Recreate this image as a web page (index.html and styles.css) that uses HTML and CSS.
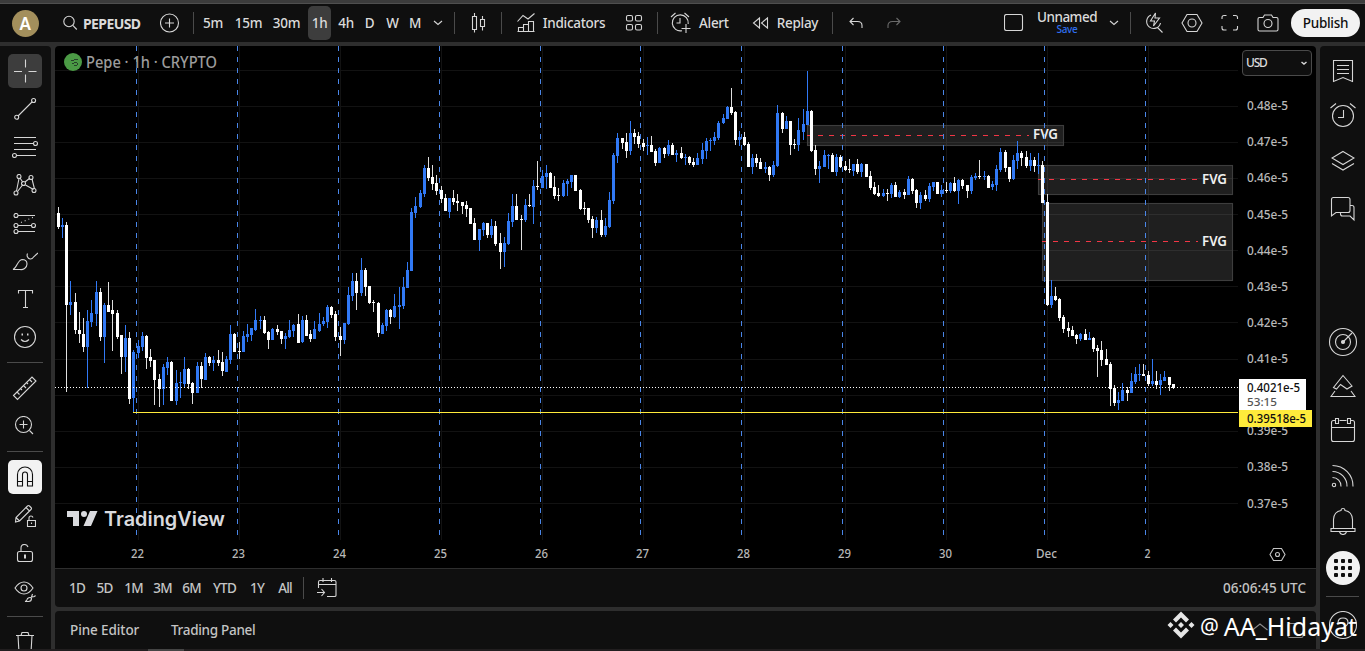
FILE: index.html
```html
<!DOCTYPE html>
<html lang="en">
<head>
    <meta charset="UTF-8">
    <meta name="viewport" content="width=device-width, initial-scale=1.0">
    <title>PEPEUSD</title>
    <link rel="stylesheet" href="styles.css">
</head>
<body>

<header class="topbar">
    <div class="avatar">A</div>
    <div class="symbol">
        <svg width="16" height="16" viewBox="0 0 16 16"><circle cx="7" cy="6.5" r="5.2"/><path d="M10.8 10.3l4 4.2"/></svg>
        <b>PEPEUSD</b>
    </div>
    <svg width="20" height="20" viewBox="0 0 20 20"><circle cx="9.500" cy="10" r="9"/><path d="M5 10h9M9.500 5.500v9"/></svg>
    <i class="sep"></i>
    <span>5m</span>
    <span>15m</span>
    <span>30m</span>
    <span class="active">1h</span>
    <span>4h</span>
    <span>D</span>
    <span>W</span>
    <span>M</span>
    <svg width="10" height="6" viewBox="0 0 10 6"><path d="M1 1l4 3.5L9 1"/></svg>
    <i class="sep"></i>
    <svg width="16" height="20" viewBox="0 0 16 20"><path d="M1.5 3.5h4v13h-4zM3.5 0v3.5M3.5 16.500v3M9.500 6.500h4v7h-4zM11.500 3v3.500M11.500 13.500v4"/></svg>
    <i class="sep"></i>
    <div class="tool">
        <svg width="18" height="20" viewBox="0 0 18 20"><path d="M.5 8.500l5.500-6 5 3.500 6.500-5.500M1.500 18.500v-4h5v4M6.500 18.500v-7h5v7M11.500 18.500v-10h5v10M.5 18.500h17"/></svg>
        <span>Indicators</span>
    </div>
    <svg width="18" height="18" viewBox="0 0 18 18"><rect x="1.500" y="1.500" width="6" height="5.500" rx="1.500"/><rect x="10.500" y="1.500" width="6" height="5.500" rx="1.500"/><rect x="1.500" y="10.500" width="6" height="5.500" rx="1.500"/><rect x="10.500" y="10.500" width="6" height="5.500" rx="1.500"/></svg>
    <i class="sep"></i>
    <div class="tool alert">
        <svg width="21" height="22" viewBox="0 0 21 22"><path d="M12 18.700A8 8 0 1 1 18.200 12M1 5l4.500-4M14.500 1l4.500 4M10 6v5H6.500M11.500 16.500h9M16 12v9"/></svg>
        <span>Alert</span>
    </div>
    <div class="tool">
        <svg width="17" height="14" viewBox="0 0 17 14"><path d="M7.500 2v10L1.500 7zM15.500 2v10l-6-5z"/></svg>
        <span>Replay</span>
    </div>
    <i class="sep"></i>
    <svg width="14" height="12" viewBox="0 0 14 12"><path d="M4.500 1L1 4.500 4.500 8M1 4.500h7.500c3 0 4.500 1.500 4.500 4V11"/></svg>
    <svg class="dim" width="14" height="12" viewBox="0 0 14 12"><path d="M9.500 1L13 4.500 9.500 8M13 4.500H5.500C2.500 4.500 1 6 1 8.500V11"/></svg>
    <i></i>
    <svg width="20" height="18" viewBox="0 0 20 18"><rect x=".5" y=".5" width="18" height="16" rx="2"/></svg>
    <div class="layout">
        <span>Unnamed</span>
        <small>Save</small>
    </div>
    <svg width="10" height="6" viewBox="0 0 10 6"><path d="M1 1l4 3.500L9 1"/></svg>
    <i class="sep"></i>
    <svg width="20" height="22" viewBox="0 0 20 22"><path d="M7 3a7 7 0 1 0 9.500 8M13.500 15.500l5 5M11.500 1L6.500 9h4l-1 5 6-8h-4.500z"/></svg>
    <svg width="22" height="20" viewBox="0 0 22 20"><path d="M6 1.500h10l5 8.500-5 8.500H6L1 10z"/><circle cx="11" cy="10" r="4"/></svg>
    <svg width="18" height="18" viewBox="0 0 18 18"><path d="M1 5V3.500Q1 1.500 3 1.500H5.500M12 1.500h2.500q2 0 2 2V5M16.500 12v2q0 2-2 2H12M5.500 16H3q-2 0-2-2v-2"/></svg>
    <svg width="22" height="20" viewBox="0 0 22 20"><path d="M2.500 4.500H6L7.500 2h7L16 4.500h3.500q1.500 0 1.500 1.500v10.500q0 1.500-1.500 1.500h-17Q1 18 1 16.500V6q0-1.500 1.500-1.500z"/><circle cx="11" cy="10.500" r="4"/></svg>
    <div class="publish">Publish</div>
</header>

<div class="main">
    <nav class="drawbar">
        <div class="btn on"><svg width="26" height="26" viewBox="0 0 26 26"><path d="M13.500 1.500v8M13.500 16.500v8M2 13.500h8M16.500 13.500h8"/></svg></div>
        <svg width="24" height="24" viewBox="0 0 24 24"><path d="M5 19L19 5"/><circle cx="3.700" cy="20.300" r="2"/><circle cx="20.600" cy="3.500" r="2"/></svg>
        <svg width="26" height="22" viewBox="0 0 26 22"><path d="M2 1.500h22M2 7.500h19.500M2 13.500h22M5 19.500h19"/><circle cx="23.500" cy="7.500" r="2"/><circle cx="2.500" cy="19.500" r="2"/></svg>
        <svg width="24" height="22" viewBox="0 0 24 22"><path d="M3.500 17L6 4.500M4.500 17.500l5.500-7M7 4l3 4.500M12 8l5-4M12.500 11l8 4.500M19 5l2.500 10"/><circle cx="3" cy="19" r="2"/><circle cx="6" cy="2.500" r="2"/><circle cx="10.500" cy="9.500" r="2"/><circle cx="18" cy="3.500" r="2"/><circle cx="21" cy="16.500" r="2"/></svg>
        <svg class="down" width="24" height="22" viewBox="0 0 24 22"><path d="M5 2.500h17M5 12.500h13M5 18.500h17"/><path d="M8 9.500l14-6" stroke-dasharray="1 3"/><circle cx="3" cy="2.500" r="2"/><circle cx="3" cy="12.500" r="2"/><circle cx="20.500" cy="12.500" r="2"/><circle cx="3" cy="18.500" r="2"/></svg>
        <svg class="down" width="26" height="20" viewBox="0 0 26 20"><path d="M1 17.500C5 16 5.500 8 10 7.500q5 0 5 4.500c0 4-4 6-7 5.500zM15.500 1.500c-1 2 0 5 2.500 5.500 2 .5 3-1 4-2.500l4-3.500"/></svg>
        <svg width="18" height="20" viewBox="0 0 18 20"><path d="M2.500 4.500V1.500h14v3M9.500 1.500v17M7 18.500h5"/></svg>
        <svg width="24" height="24" viewBox="0 0 24 24"><circle cx="12" cy="12" r="10.500"/><path d="M8 14.500q4 4 8 0"/><path d="M8.500 9.500h1.500M14 9.500h1.500" stroke-width="2"/></svg>
        <i class="line"></i>
        <svg width="26" height="26" viewBox="0 0 26 26"><path d="M1.500 20.500L20 2l4 4L5.500 24.500zM5 17l2.500 2.500M8.500 13.500l1.500 1.500M11.500 10.500l2.500 2.500M14.500 7.500l1.500 1.500M17.500 4.500L20 7"/></svg>
        <svg width="22" height="20" viewBox="0 0 22 20"><circle cx="9.500" cy="8.500" r="8"/><path d="M15.500 14.500l3.500 3.500M5.500 8.500h8M9.500 4.500v8"/></svg>
        <i class="line"></i>
        <div class="btn magnet"><svg width="18" height="22" viewBox="0 0 18 22"><path d="M1.500 20V8.500a7.500 7.500 0 0 1 15 0V20h-5V8.500a2.500 2.500 0 0 0-5 0V20zM1.500 15.500h5M11.500 15.500h5"/></svg></div>
        <svg width="22" height="24" viewBox="0 0 22 24"><path d="M1.500 18l.5-4.500L13.500 2q1-1 2 0l1.500 1.500q1 1 0 2L5.500 17zM2 13.500L5.500 17M12 3.500L15.500 7M13.500 16.500h8v6h-8zM15 16v-2q0-2 2-2 1.500 0 2 1.500M17.500 18.500v1.500"/></svg>
        <svg width="18" height="20" viewBox="0 0 18 20"><rect x="1.500" y="7.500" width="15" height="10" rx="2"/><path d="M5 7V4q0-3.500 3.500-3.500Q11 .5 12 3"/><path d="M9 10.500v4" stroke-width="2"/></svg>
        <svg width="22" height="24" viewBox="0 0 22 24"><path d="M1 8q4-6 9-6t9 6q-4 6-9 6T1 8zM11 21.500q2-.5 2.500-3 3-2 4 0 0 3-3 3zM18.500 14l-1 3 3-.500 1-1"/><circle cx="10" cy="8" r="3"/></svg>
        <i class="line"></i>
        <svg width="20" height="22" viewBox="0 0 20 22"><path d="M1 4.500h18M6 4.500L7 1.500h6l1 3M3 4.500l1 17h12l1-17"/></svg>
    </nav>

    <div class="center">
        <div class="chart">
            <svg id="chart" class="plot" width="1261" height="522" viewBox="55 46 1261 522"></svg>
            <div class="currency">USD <svg width="8" height="6" viewBox="0 0 8 6"><path d="M1.500 2l2.500 2 2.500-2" stroke-width="1.500"/></svg></div>
        </div>
        <div class="ranges">
            <span>1D</span>
            <span>5D</span>
            <span>1M</span>
            <span>3M</span>
            <span>6M</span>
            <span>YTD</span>
            <span>1Y</span>
            <span>All</span>
            <i class="sep"></i>
            <svg width="20" height="20" viewBox="0 0 20 20"><path d="M1.500 10V4q0-1.500 1.500-1.500h14.500q1.500 0 1.500 1.500v13.500q0 1-1.500 1H10M1.500 6.500H19M6 0v4M14.500 0v4M0 14.500h7M4.500 11l3 3.500-3 3.500"/></svg>
            <i></i>
            <span class="clock">06:06:45 UTC</span>
        </div>
        <div class="panels">
            <span class="pine">Pine Editor</span>
            <span class="trading">Trading Panel</span>
            <svg class="panel-icons" width="54" height="18" viewBox="0 0 54 18"><path d="M1.500 9L9 3l7.500 6M38.500 2.500h12q1.500 0 1.500 1.500v11q0 1.500-1.500 1.500h-12Q37 16.500 37 15V4q0-1.500 1.500-1.500z"/></svg>
        </div>
    </div>

    <nav class="sidebar">
        <svg width="22" height="24" viewBox="0 0 22 24"><path d="M1.500 1.500h19v21L11 18.500l-9.500 4zM5 6.500h12M5 10.500h12M5 14.500h12"/></svg>
        <svg width="26" height="26" viewBox="0 0 26 26"><circle cx="13" cy="14" r="10.500"/><path d="M13.500 8v7.500H8M.5 6L6 1.500M20 1.500L25.500 6"/></svg>
        <svg width="24" height="22" viewBox="0 0 24 22"><path d="M12 1.500L23 8l-11 6.500L1 8zM1 13.500l11 6.500 11-6.500"/></svg>
        <svg width="26" height="26" viewBox="0 0 26 26"><path d="M1.500 20V3.500Q1.500 1.500 3.500 1.500h14.500q2 0 2 2v11q0 2-2 2H6zM20.500 9.500H22q2 0 2 2V24l-4-4h-7.500q-2 0-2-2v-1"/></svg>
        <i></i>
        <svg width="30" height="30" viewBox="0 0 30 30"><circle cx="15" cy="15" r="13.500"/><circle cx="15" cy="15" r="7.500"/><path d="M15 15l9-9"/><circle cx="15" cy="15" r="1.500" class="solid"/></svg>
        <svg width="26" height="24" viewBox="0 0 26 24"><path d="M13 1.500l-9.500 12 3 1.500 4-4.500 6.500 4.500 5-3zM5 17l-4 5.500h24L21 17"/></svg>
        <svg width="26" height="26" viewBox="0 0 26 26"><path d="M5 3.500H3.500q-2 0-2 2v17q0 2 2 2h19q2 0 2-2v-17q0-2-2-2H21M9.500 3.500h7M1.500 10.500h23M5.500 1.500h3v5h-3zM17.500 1.500h3v5h-3z"/></svg>
        <svg width="24" height="24" viewBox="0 0 24 24"><circle cx="3" cy="21" r="1.700"/><path d="M1.500 13.500a8.500 8.500 0 0 1 8.500 9M1.500 7.500a14.500 14.500 0 0 1 14.500 15M1.500 1.500a20.500 20.500 0 0 1 20.500 21"/></svg>
        <svg width="26" height="28" viewBox="0 0 26 28"><path d="M3.500 21.500v-9Q4 4.500 11 3.500q0-2 2-2t2 2q7 1 7.500 9v9M1 21.500h24v3H1zM9.500 25q1 2.500 3.500 2.500t3.500-2.500"/></svg>
        <div class="apps"><b></b><b></b><b></b><b></b><b></b><b></b><b></b><b></b><b></b></div>
        <i class="line"></i>
        <svg width="30" height="30" viewBox="0 0 30 30"><circle cx="15" cy="14" r="13.500"/><path d="M10 12q0-5 5-5t5 4.500q0 3-5 5v2M15 21v1.500"/></svg>
    </nav>
</div>

<footer class="bottom"><i></i></footer>

<div class="handle">
    <svg width="28" height="28" viewBox="0 0 28 28"><path d="M14 .5l8 8-3 3-5-5-5 5-3-3zM3.500 11l3 3-3 3-3-3zM24.500 11l3 3-3 3-3-3zM14 11l3 3-3 3-3-3zM9 16.500l5 5 5-5 3 3-8 8-8-8z"/></svg>
    <span class="at">@</span>
    <span class="name">AA_Hidayat</span>
</div>

<script src="chart.js"></script>
</body>
</html>
```
FILE: styles.css
```css
* {
    box-sizing: border-box;
}

body {
    margin: 0;
    width: 1365px;
    height: 651px;
    overflow: hidden;
    background: #2e2e2e;
    color: #dbdbdb;
    font-family: "Noto Sans", sans-serif;
    font-size: 13.5px;
    font-weight: 500;
    letter-spacing: -0.3px;
    position: relative;
}

svg {
    display: block;
    fill: none;
    stroke: #d6d6d6;
    stroke-width: 1.1;
}

.topbar {
    height: 42px;
    border-top: 3px solid #3c3c3c;
    box-shadow: inset 0 1px #4f4f4f;
    background: #0f0f0f;
    padding-top: 1px;
    display: grid;
    grid-template-columns: 50px 97px 45px 3px 36px 35px 41px 25px 28px 19px 27px 18px 28px 5px 43px 3px 116px 29px 19px 73px 90px 5px 41px 35px 1fr 35px 72px 22px 11px 35px 42px 34px 41px 77px;
    align-items: center;
    justify-items: center;
}

.avatar {
    width: 27px;
    height: 27px;
    border-radius: 50%;
    background: #a38f5c;
    color: #fff;
    font-size: 17px;
    font-weight: 600;
    line-height: 27px;
    text-align: center;
}

.symbol {
    justify-self: start;
    padding-left: 12px;
    display: flex;
    align-items: center;
    gap: 5px;
}

.symbol b {
    font-size: 14px;
    letter-spacing: -0.6px;
}

.sep {
    width: 1px;
    height: 22px;
    background: #4a4a4a;
}

.active {
    width: 23px;
    height: 34px;
    line-height: 34px;
    text-align: center;
    border-radius: 5px;
    background: #3d3d3d;
}

.tool {
    display: flex;
    align-items: center;
    gap: 8px;
}

.alert {
    justify-self: start;
    padding-left: 3px;
    gap: 8px;
}

.dim {
    stroke: #6a6a6a;
}

.layout {
    display: flex;
    flex-direction: column;
    align-items: center;
    line-height: 14px;
    margin-top: -1px;
}

.layout span {
    letter-spacing: -0.5px;
}

.layout small {
    font-size: 10px;
    line-height: 11px;
    color: #2f6fef;
}

.publish {
    width: 69px;
    height: 28px;
    margin-right: 2px;
    border-radius: 14px;
    background: #f2f2f2;
    color: #0f0f0f;
    line-height: 28px;
    text-align: center;
}

.main {
    display: grid;
    grid-template-columns: 51px 1261px 45px;
    column-gap: 4px;
    height: 603px;
    margin-top: 4px;
}

.drawbar {
    background: #0f0f0f;
    border-top-right-radius: 4px;
    padding: 6px 1px 0 0;
    overflow: hidden;
    display: grid;
    grid-template-rows: repeat(8, 38px) 13px 38px 37px 14px 38px 39px 38px 37px 13px 38px;
    align-items: center;
    justify-items: center;
}

.down {
    margin-top: 2px;
}

.btn {
    width: 34px;
    height: 34px;
    border-radius: 5px;
    display: flex;
    align-items: center;
    justify-content: center;
}

.on {
    background: #3d3d3d;
}

.magnet {
    background: #f2f2f2;
}

.magnet svg {
    stroke: #0f0f0f;
}

.line {
    width: 36px;
    height: 1px;
    background: #4a4a4a;
}

.center {
    display: flex;
    flex-direction: column;
}

.chart {
    height: 522px;
    background: #000;
    border-radius: 4px 4px 0 0;
    overflow: hidden;
    position: relative;
}

.plot {
    stroke: none;
    letter-spacing: 0;
}

.plot text {
    fill: #b8b8b8;
    font-size: 12px;
}

.plot .legend {
    fill: #9c9c9c;
    font-size: 16px;
}

.plot .fvg {
    fill: #f0f0f0;
    font-size: 13.5px;
    font-weight: 600;
}

.plot .brand {
    fill: #d9dade;
    font-family: Inter, sans-serif;
    font-size: 20px;
    font-weight: 600;
}

.plot .dark {
    fill: #0f0f0f;
}

.plot .timer {
    fill: #555;
    font-size: 11.5px;
}

/* sits over the price scale */
.currency {
    position: absolute;
    top: 4px;
    right: 4px;
    width: 70px;
    height: 26px;
    padding: 0 3px 1px 3px;
    border: 1px solid #4a4a4a;
    border-radius: 4px;
    background: #0f0f0f;
    display: flex;
    align-items: center;
    justify-content: space-between;
    font-size: 12px;
    letter-spacing: -1.2px;
}

.ranges {
    height: 39px;
    border-top: 1px solid #2e2e2e;
    border-radius: 0 0 4px 4px;
    background: #0f0f0f;
    padding: 0 10px;
    display: grid;
    grid-template-columns: 25px 30px 28px 30px 28px 38px 27px 29px 7px 39px 1fr auto;
    align-items: center;
    justify-items: center;
    color: #c4c4c4;
}

.ranges span {
    letter-spacing: -0.8px;
    margin-right: 1px;
}

.ranges .clock {
    letter-spacing: 0;
    margin-right: 0;
}

.panels {
    height: 38px;
    margin-top: 4px;
    border-radius: 4px 4px 0 0;
    background: #0f0f0f;
    padding: 0 11px 0 15px;
    display: flex;
    align-items: center;
    color: #c4c4c4;
}

.pine {
    width: 101px;
    letter-spacing: -0.1px;
}

.panel-icons {
    margin-left: auto;
    stroke: #8a8a8a;
}

.sidebar {
    background: #0f0f0f;
    border-top-left-radius: 4px;
    overflow: hidden;
    display: grid;
    grid-template-rows: 49px 40px 52px 44px 89px 44px 44px 44px 48px 42px 52px 4px 56px;
    align-items: center;
    justify-items: center;
}

.sidebar .line {
    width: 33px;
}

.sidebar .solid {
    fill: #d6d6d6;
}

.apps {
    width: 34px;
    height: 34px;
    border-radius: 50%;
    background: #f2f2f2;
    display: grid;
    grid-template-columns: repeat(3, 4px);
    gap: 3px;
    align-content: center;
    justify-content: center;
}

.apps b {
    height: 4px;
    border-radius: 1px;
    background: #0f0f0f;
}

.bottom {
    height: 2px;
    background: #211e1f;
}

.bottom i {
    display: block;
    width: 36px;
    height: 2px;
    margin-left: 148px;
    background: #454545;
}

/* account handle laid over the bottom right corner */
.handle {
    position: absolute;
    right: 8px;
    bottom: 8px;
    display: flex;
    align-items: center;
    font-size: 25px;
    line-height: 34px;
    font-weight: 400;
    letter-spacing: 0;
    color: #fff;
}

.handle svg {
    fill: #e6e6e6;
    stroke: none;
    margin-top: -2px;
}

.at {
    margin-left: 5px;
    font-size: 21px;
}

.name {
    margin-left: 5px;
}
```
FILE: chart.js
```js
const NS = 'http://www.w3.org/2000/svg'
const chart = document.getElementById('chart')

// one candle per hour: direction, high, body top, body bottom, low
const candles = `
w207,213,227,229 b218,225,227,238 w222,225,305,392 b281,302,305,315 w293,302,330,334 w312,330,334,343
w318,334,347,352 b310,321,347,388 b300,313,322,327 b281,292,314,326 w288,292,337,341 b303,305,337,363
w282,305,312,312 w300,310,314,351 w310,313,337,339 w335,335,357,374 b325,338,357,372 w332,338,399,404
b350,352,398,412 b340,346,353,358 b332,336,347,351 w335,336,358,369 w349,357,361,367 w360,360,380,405
w374,379,389,407 b364,367,389,405 b357,362,368,375 w361,362,401,401 b370,383,401,405 b372,382,383,398
b357,369,384,387 w368,369,384,389 w382,383,393,404 b362,366,393,393 w362,366,379,388 b353,357,380,380
w356,357,363,366 b356,360,363,371 w350,360,363,366 w352,362,371,376 b356,359,372,372 b325,334,360,364
w333,334,352,352 w342,351,352,359 b331,336,352,352 b324,334,337,342 b328,328,335,341 b309,320,330,331
b316,320,321,329 w316,320,333,334 w331,332,340,349 b328,329,340,340 w325,329,332,335 w331,331,339,344
b333,336,339,349 b320,330,337,338 b324,325,331,337 w314,324,343,343 b316,320,342,343 w315,320,336,336
w330,334,339,342 b321,329,339,339 b313,324,331,332 b317,321,324,326 b305,307,322,328 w306,307,315,318
w311,314,337,341 w327,336,340,356 b323,323,340,344 b287,295,324,325 b273,281,296,301 w273,281,293,310
b258,270,293,296 w268,270,287,296 w286,286,303,304 w300,302,303,312 w302,303,333,337 b323,325,334,334
b309,310,326,331 w309,310,317,324 b294,306,317,318 b287,305,307,329 b277,287,306,309 b262,270,288,288
b208,212,271,271 b197,206,213,218 b190,193,207,208 b165,168,194,197 w157,168,178,181 w165,177,184,190
w175,183,191,195 w186,190,199,203 w194,198,211,211 b198,198,212,218 w190,198,202,205 w194,201,203,211
w202,202,206,214 w201,205,209,217 w208,208,224,224 w218,223,240,240 b229,229,240,251 b222,223,230,236
w223,223,235,238 b219,226,235,238 w221,226,244,246 w233,243,252,269 b237,243,252,267 b213,221,244,245
b194,206,222,227 w194,206,220,220 w215,219,220,250 b199,205,220,222 w194,205,206,207 b180,186,207,224
w161,186,187,190 b170,176,188,188 b165,173,177,189 w172,173,188,188 w176,187,196,199 w188,195,196,201
b180,183,196,197 b179,181,184,196 b175,175,182,188 w175,175,191,191 w189,190,209,210 w202,208,209,215
w208,208,220,223 w216,219,228,238 b217,220,228,233 w210,220,235,237 b218,226,235,237 b192,200,227,228
b153,155,201,204 b133,138,156,163 w138,138,143,149 w133,142,151,158 b121,133,151,155 w129,133,137,144
w132,136,144,148 w139,143,147,151 b137,145,146,155 w136,145,152,152 w149,151,163,166 b147,148,163,163
w147,148,154,158 b140,145,154,156 w143,145,155,155 b150,153,155,162 w147,153,158,159 b154,157,158,165
w156,157,163,165 w158,162,165,167 b153,158,165,165 b143,150,159,164 b138,141,151,159 b138,140,141,151
b132,137,141,145 b121,123,138,140 b114,118,123,124 b106,107,119,119 w88,107,113,115 w111,112,140,145
b131,137,140,146 w132,137,145,146 w142,144,167,167 b154,158,167,174 w154,158,163,167 w158,162,169,169
b162,167,169,173 w166,167,175,181 b161,165,175,177 b105,113,166,167 w112,113,129,133 b116,121,129,129
w121,121,145,155 w139,144,145,149 b118,130,145,151 b109,124,132,140 b71,111,125,125 w110,111,151,152
w145,150,169,175 b161,166,169,183 b150,155,167,167 b154,155,156,169 w153,155,172,172 b154,157,172,176
w155,157,167,168 w161,166,170,171 w159,169,170,173 b164,164,171,176 w159,164,172,174 b163,164,172,177
w164,164,177,177 w171,176,188,190 w182,187,194,195 w185,193,196,197 b189,193,196,197 w189,193,194,201
b183,185,194,198 w182,185,197,197 b190,192,197,198 w189,192,195,199 b176,179,195,195 w178,179,191,194
w189,190,203,208 b192,195,203,209 w190,195,199,201 b183,186,199,202 b182,182,187,191 w182,182,194,194
b185,190,194,197 w182,190,191,193 b182,183,191,193 w177,183,191,192 b179,180,191,204 w179,180,186,189
w185,185,191,198 b175,177,191,194 b173,176,178,180 w160,176,177,179 b171,176,177,180 w175,176,188,188
b181,184,187,190 b165,169,185,191 b148,152,170,172 w150,152,168,172 w167,167,179,182 b155,160,179,180
b141,153,161,169 w151,153,158,166 w151,157,166,168 b153,160,166,171 w157,160,166,172 b153,165,166,174
w161,165,203,203 w194,202,305,306 b280,296,305,308 w287,296,300,301 w298,299,318,321 w315,317,329,333
w322,328,331,337 w326,330,336,336 w334,335,339,344 b333,334,339,341 w329,334,340,340 b332,338,340,340
w337,338,349,352 w345,348,351,377 w341,350,360,366 w349,359,365,365 w362,364,389,406 w385,388,403,406
b392,400,403,410 b383,390,401,401 w387,390,393,401 b373,381,393,393 b367,374,382,384 b364,374,375,381
w364,374,376,376 w371,375,384,386 b359,381,384,386 w371,381,385,389 b374,380,385,395 b371,377,381,381
w377,377,385,391 w384,384,388,389`.trim().split(/\s+/)

function add(tag, attrs, text) {
    const el = document.createElementNS(NS, tag)
    for (const key in attrs) el.setAttribute(key, attrs[key])
    if (text) el.textContent = text
    chart.appendChild(el)
}

function rect(x, y, width, height, fill) {
    add('rect', { x, y, width, height, fill })
}

function label(x, y, width, text, cls) {
    add('text', { x, y, textLength: width, lengthAdjust: 'spacingAndGlyphs', class: cls || '' }, text)
}

function line(x1, y1, x2, y2, stroke, dash) {
    add('line', { x1, y1, x2, y2, stroke, 'stroke-dasharray': dash || 'none', 'stroke-width': 1 })
}

// grid and day labels
const days = ['22', '23', '24', '25', '26', '27', '28', '29', '30', 'Dec', '2']
const rows = [70, 106, 142, 178, 214, 250, 286, 322, 359, 395, 431, 467, 503]
rows.forEach((y, i) => {
    rect(55, y, 1183, 1, '#121212')
    // the last price tag covers the 0.40e-5 label
    if (i > 0 && i !== 9) label(1247, y + (i > 3 && i < 8 || i === 12 ? 5 : 4), 41, '0.' + (49 - i) + 'e-5')
})
days.forEach((day, i) => {
    rect(138 + i * 101, 46, 1, 494, '#121212')
    const w = day === 'Dec' ? 21 : day === '2' ? 6 : 13
    label(138 + i * 101 - w / 2 - 0.5, 558, w, day)
})

// fair value gaps
const gaps = [
    [807, 125, 1064, 146, 135, 139],
    [1038, 165, 1233, 195, 179, 184],
    [1042, 203, 1233, 281, 241, 246]
]
gaps.forEach(([x1, y1, x2, y2, mid, base]) => {
    add('rect', { x: x1 + 0.5, y: y1 + 0.5, width: x2 - x1 - 1, height: y2 - y1 - 1, fill: '#ffffff', 'fill-opacity': 0.12, stroke: '#3d3d3d' })
    line(x1, mid + 0.5, x2 - 35, mid + 0.5, '#f23645', '5 6')
    label(x2 - 31, base, 25, 'FVG', 'fvg')
})

// candles
candles.forEach((c, i) => {
    const x = Math.floor(58.2 + i * 101 / 24)
    const [high, top, bottom, low] = c.slice(1).split(',').map(Number)
    const up = c[0] === 'b'
    rect(x, high, 1, low - high, up ? '#3179f5' : '#dedede')
    rect(x - 1, top, 3, bottom - top, up ? '#3179f5' : '#ffffff')
})

// day separators
const separators = [136, 237, 338, 439, 540, 640, 741, 842, 943, 1044, 1145]
separators.forEach(x => line(x + 0.5, 46, x + 0.5, 536, '#4a86e8', '5 6'))

// last price and support line
line(55, 387.5, 1238, 387.5, '#ffffff', '1 2')
rect(133, 412, 1105, 1, '#ffeb3b')
rect(1239, 379, 67, 31, '#ffffff')
label(1247, 392, 53, '0.4021e-5', 'dark')
label(1247, 406, 30, '53:15', 'timer')
rect(1239, 410, 73, 17, '#ffeb3b')
label(1247, 423, 59, '0.39518e-5', 'dark')

// legend
add('circle', { cx: 73, cy: 62, r: 9, fill: '#4b9a45' })
add('path', { d: 'M71 60h3v1h-3zM74 59h4v1h-4zM72 63h2v1h-2zM74 62h3v1h-3zM74 65h3v1h-3zM77 63h1v2h-1z', fill: '#26402a' })
label(86, 68, 131, 'Pepe · 1h · CRYPTO', 'legend')

// logo
add('path', { d: 'M67 511h12v15h-6v-9h-6zM90 511h7.500l-6.500 15h-7.500z', fill: '#d9dade' })
add('circle', { cx: 84, cy: 514, r: 3, fill: '#d9dade' })
label(104, 526, 121, 'TradingView', 'brand')

// scale settings
add('path', { d: 'M1273.500 548.500h8l3.500 6-3.500 6h-8l-3.500-6z', fill: 'none', stroke: '#c4c4c4' })
add('circle', { cx: 1277.5, cy: 554.5, r: 2, fill: 'none', stroke: '#c4c4c4' })
```
